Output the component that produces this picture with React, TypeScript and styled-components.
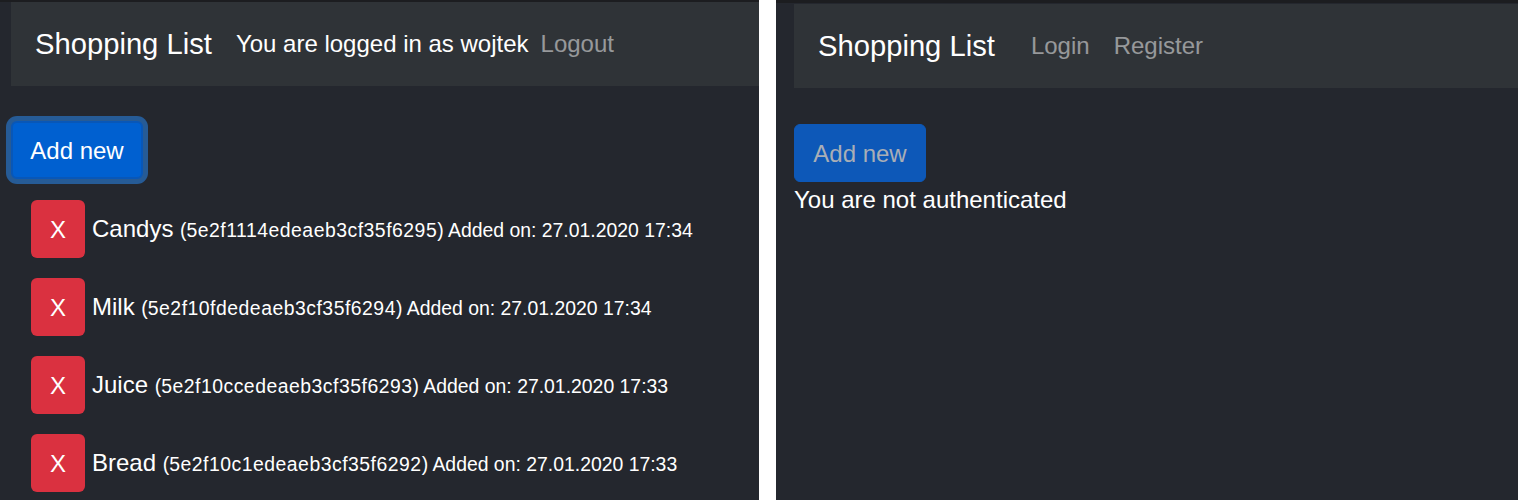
import React from "react";
import styled, { createGlobalStyle, css } from "styled-components";

const GlobalStyle = createGlobalStyle`
  html, body {
    margin: 0;
    padding: 0;
    background: #ffffff;
  }
  body {
    font-family: "Liberation Sans", Arial, Helvetica, sans-serif;
    -webkit-font-smoothing: antialiased;
  }
  * { box-sizing: border-box; }
`;

const Page = styled.div`
  display: flex;
  gap: 17px;
  height: 500px;
  overflow: hidden;
  background: #ffffff;
`;

const Panel = styled.section<{ $width: number; $strip: number; $inset: number; $top: number }>`
  width: ${(p) => p.$width}px;
  flex: none;
  height: 500px;
  overflow: hidden;
  background: #24272e;
  border-top: ${(p) => p.$strip}px solid #1c1d20;
  padding-top: ${(p) => p.$top}px;
  padding-left: ${(p) => p.$inset}px;
`;

const Navbar = styled.nav`
  display: flex;
  align-items: center;
  height: 84px;
  padding: 0 24px;
  background: #2f3337;
`;

const Brand = styled.span`
  font-size: 29.2px;
  line-height: 45px;
  color: #ffffff;
  margin-right: 24px;
  white-space: nowrap;
`;

const NavText = styled.span`
  font-size: 24px;
  line-height: 36px;
  color: #ffffff;
  white-space: nowrap;
`;

const NavLink = styled.a`
  font-size: 24px;
  line-height: 36px;
  padding: 0 12px;
  color: rgba(255, 255, 255, 0.5);
  text-decoration: none;
  white-space: nowrap;
`;

const Content = styled.div<{ $gap: number }>`
  padding-top: ${(p) => p.$gap}px;
  display: flex;
  flex-direction: column;
  align-items: flex-start;
`;

const PrimaryButton = styled.button<{ $focused?: boolean; $disabled?: boolean }>`
  height: 58px;
  width: 132px;
  padding: 2px 0 0;
  font-family: inherit;
  font-size: 24px;
  line-height: 36px;
  border-radius: 6px;
  cursor: pointer;
  ${(p) =>
    p.$disabled
      ? css`
          background: #0d58b8;
          border: 1px solid #0d58b8;
          color: #a9aeb6;
        `
      : css`
          background: #0060d0;
          border: 2px solid #0857b8;
          color: #ffffff;
        `}
  ${(p) =>
    p.$focused &&
    css`
      box-shadow: 0 0 0 5px #265b96;
    `}
`;

const Notice = styled.div`
  font-size: 24px;
  line-height: 36px;
  color: #ffffff;
`;

const List = styled.ul`
  list-style: none;
  margin: 21px 0 0;
  padding: 0 0 0 20px;
  display: flex;
  flex-direction: column;
  gap: 20px;
`;

const Row = styled.li`
  display: flex;
  align-items: center;
  white-space: nowrap;
`;

const DeleteButton = styled.button`
  width: 54px;
  height: 58px;
  flex: none;
  padding: 2px 0 0;
  border: none;
  border-radius: 6px;
  background: #da3140;
  color: #ffffff;
  font-family: inherit;
  font-size: 24px;
  line-height: 36px;
  cursor: pointer;
`;

const ItemText = styled.span`
  margin-left: 7px;
  color: #ffffff;
  font-size: 24px;
  line-height: 36px;
`;

const ItemMeta = styled.span`
  font-size: 19.4px;
`;

const ItemId = styled.span`
  letter-spacing: 0.5px;
`;

const items = [
  { name: "Candys", id: "5e2f1114edeaeb3cf35f6295", date: "27.01.2020 17:34" },
  { name: "Milk", id: "5e2f10fdedeaeb3cf35f6294", date: "27.01.2020 17:34" },
  { name: "Juice", id: "5e2f10ccedeaeb3cf35f6293", date: "27.01.2020 17:33" },
  { name: "Bread", id: "5e2f10c1edeaeb3cf35f6292", date: "27.01.2020 17:33" },
];

export default function App() {
  return (
    <>
      <GlobalStyle />
      <Page>
        <Panel $width={759} $strip={2} $top={0} $inset={11}>
          <Navbar>
            <Brand>Shopping List</Brand>
            <NavText>You are logged in as wojtek</NavText>
            <NavLink href="#">Logout</NavLink>
          </Navbar>
          <Content $gap={35}>
            <PrimaryButton $focused>Add new</PrimaryButton>
          </Content>
          <List>
            {items.map((it) => (
              <Row key={it.id}>
                <DeleteButton>X</DeleteButton>
                <ItemText>
                  {it.name}{" "}
                  <ItemMeta>
                    (<ItemId>{it.id}</ItemId>) Added on: {it.date}
                  </ItemMeta>
                </ItemText>
              </Row>
            ))}
          </List>
        </Panel>
        <Panel $width={742} $strip={3} $top={1} $inset={18}>
          <Navbar>
            <Brand>Shopping List</Brand>
            <NavLink href="#">Login</NavLink>
            <NavLink href="#">Register</NavLink>
          </Navbar>
          <Content $gap={36}>
            <PrimaryButton $disabled>Add new</PrimaryButton>
            <Notice>You are not authenticated</Notice>
          </Content>
        </Panel>
      </Page>
    </>
  );
}
